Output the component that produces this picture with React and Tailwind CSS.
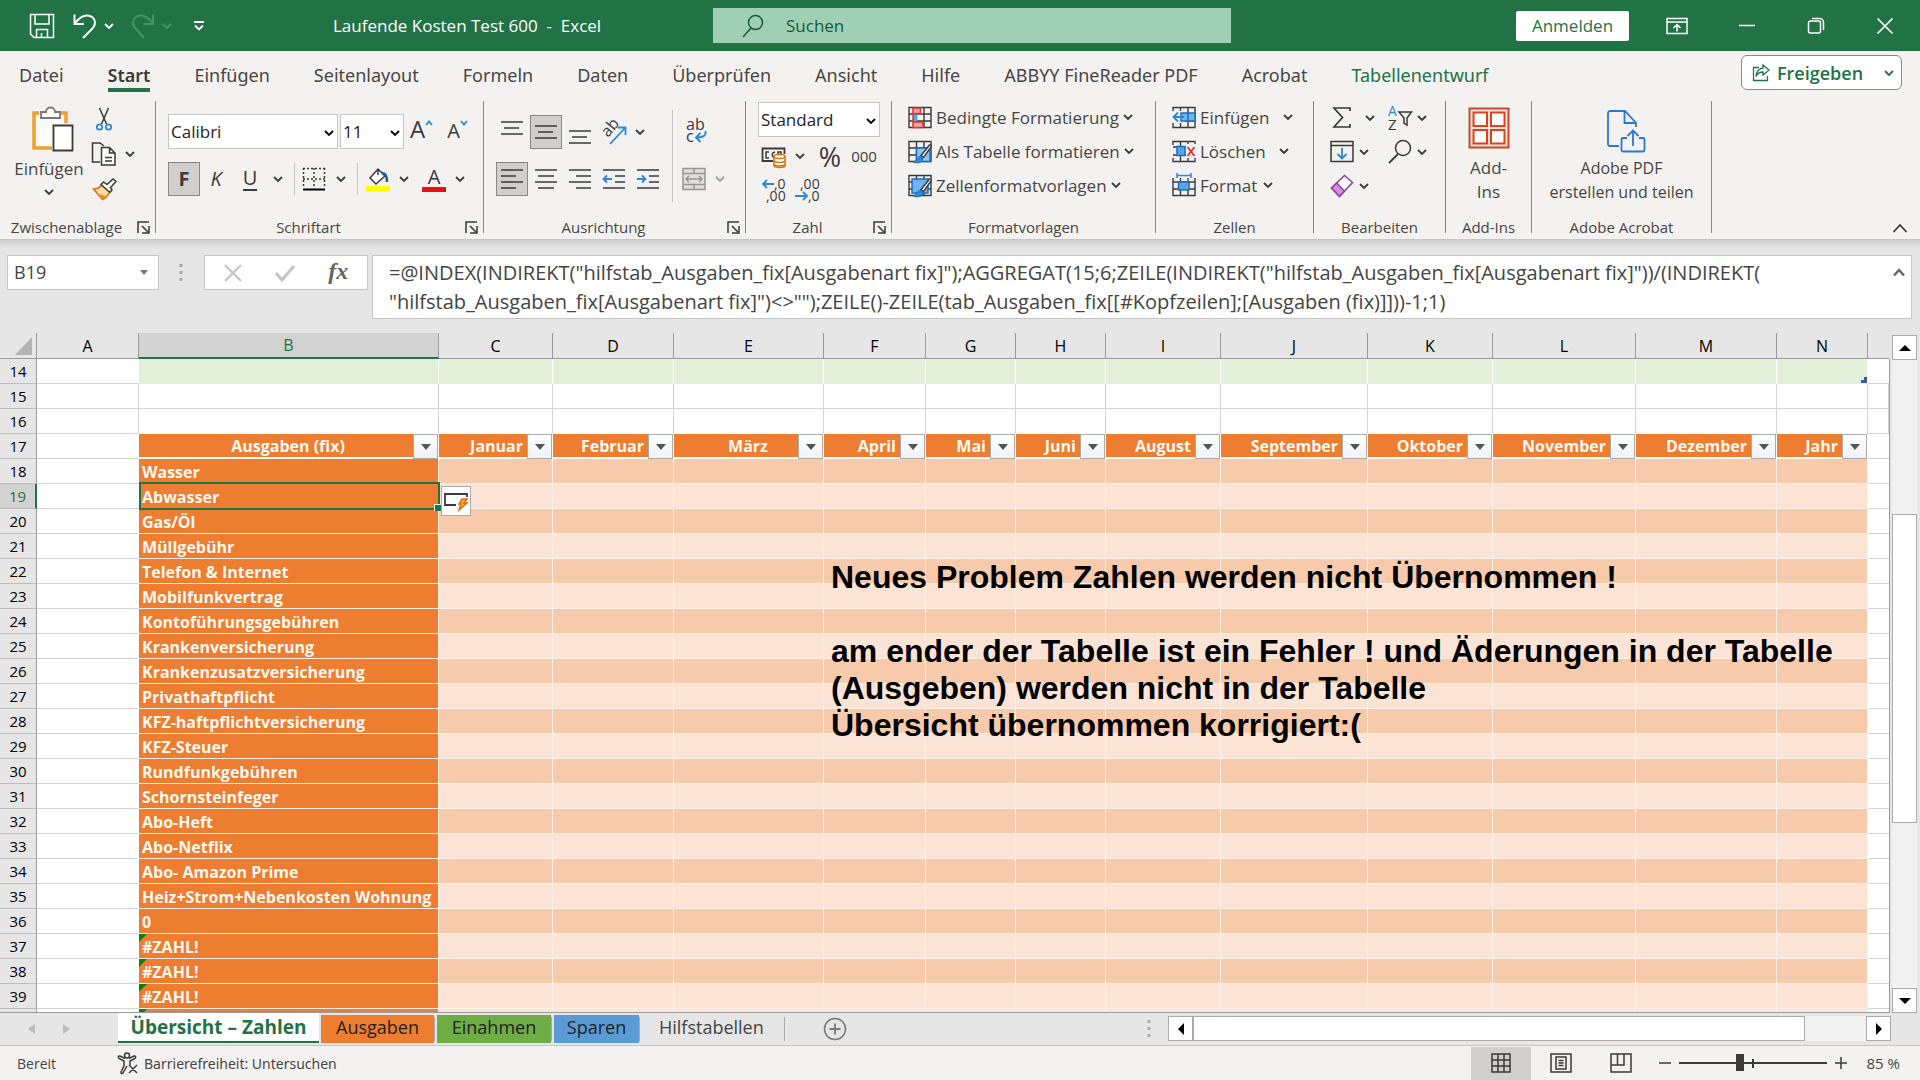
const tabs = [
  'Datei', 'Start', 'Einfügen', 'Seitenlayout', 'Formeln', 'Daten', 'Überprüfen', 'Ansicht',
  'Hilfe', 'ABBYY FineReader PDF', 'Acrobat', 'Tabellenentwurf',
];

const columns = [
  { id: 'B', width: 'w-[300px]', title: 'Ausgaben (fix)', center: true },
  { id: 'C', width: 'w-[114px]', title: 'Januar' },
  { id: 'D', width: 'w-[121px]', title: 'Februar' },
  { id: 'E', width: 'w-[150px]', title: 'März', center: true },
  { id: 'F', width: 'w-[102px]', title: 'April' },
  { id: 'G', width: 'w-[90px]', title: 'Mai' },
  { id: 'H', width: 'w-[90px]', title: 'Juni' },
  { id: 'I', width: 'w-[115px]', title: 'August' },
  { id: 'J', width: 'w-[147px]', title: 'September' },
  { id: 'K', width: 'w-[125px]', title: 'Oktober' },
  { id: 'L', width: 'w-[143px]', title: 'November' },
  { id: 'M', width: 'w-[141px]', title: 'Dezember' },
  { id: 'N', width: 'w-[91px]', title: 'Jahr' },
];

const costs = [
  'Wasser', 'Abwasser', 'Gas/Öl', 'Müllgebühr', 'Telefon & Internet', 'Mobilfunkvertrag',
  'Kontoführungsgebühren', 'Krankenversicherung', 'Krankenzusatzversicherung', 'Privathaftpflicht',
  'KFZ-haftpflichtversicherung', 'KFZ-Steuer', 'Rundfunkgebühren', 'Schornsteinfeger', 'Abo-Heft',
  'Abo-Netflix', 'Abo- Amazon Prime', 'Heiz+Strom+Nebenkosten Wohnung', '0', '#ZAHL!', '#ZAHL!',
  '#ZAHL!',
];

const formula = `=@INDEX(INDIREKT("hilfstab_Ausgaben_fix[Ausgabenart fix]");AGGREGAT(15;6;ZEILE(INDIREKT("hilfstab_Ausgaben_fix[Ausgabenart fix]"))/(INDIREKT(
"hilfstab_Ausgaben_fix[Ausgabenart fix]")<>"");ZEILE()-ZEILE(tab_Ausgaben_fix[[#Kopfzeilen];[Ausgaben (fix)]]))-1;1)`;

const sheets = [
  { name: 'Ausgaben', style: 'w-[113px] bg-[#ed7d31]' },
  { name: 'Einahmen', style: 'w-[114px] bg-[#70ad47]' },
  { name: 'Sparen', style: 'w-[85px] bg-[#5b9bd5]' },
];

function Svg({ w = 24, h = 24, className = '', children }) {
  return (
    <svg
      width={w}
      height={h}
      viewBox={`0 0 ${w} ${h}`}
      fill="none"
      stroke="#3b3a39"
      strokeWidth="1.5"
      className={`shrink-0 overflow-visible ${className}`}
      aria-hidden="true"
    >
      {children}
    </svg>
  );
}

function Chevron({ className = 'text-[#3b3a39]' }) {
  return (
    <Svg w={10} h={8} className={className}>
      <path d="M1 2 5 6 9 2" stroke="currentColor" strokeWidth="1.8" />
    </Svg>
  );
}

function IconButton({ label, active, className = 'w-8', children }) {
  return (
    <button
      aria-label={label}
      className={`flex h-[34px] shrink-0 items-center justify-center ${className} ${active ? 'border border-[#8a8886] bg-[#d0cfce]' : ''}`}
    >
      {children}
    </button>
  );
}

function Drop({ label, className = 'w-4', chevron }) {
  return (
    <button aria-label={label} className={`flex h-6 shrink-0 items-center justify-center ${className}`}>
      <Chevron className={chevron} />
    </button>
  );
}

function Group({ title, launcher, width, children }) {
  return (
    <>
      <section className={`flex h-[138px] shrink-0 flex-col ${width}`}>
        <div className="flex-1">{children}</div>
        <div className="flex h-[22px] items-center pb-[2px] text-[15px] text-[#484644]">
          <span className={`flex-1 text-center ${launcher ? 'pr-1' : ''}`}>{title}</span>
          {launcher && (
            <button aria-label={`${title} Optionen`} className="mr-[5px]">
              <Svg w={13} h={13}>
                <path d="M1 12V1h11M5 5l6 6M12 5v7H5" />
              </Svg>
            </button>
          )}
        </div>
      </section>
      <div className="h-[132px] w-px shrink-0 bg-[#8a8886]" />
    </>
  );
}

function Select({ label, value, className }) {
  return (
    <div className={`relative h-[35px] border border-[#c8c6c4] bg-white ${className}`}>
      <select aria-label={label} defaultValue={value} className="h-full w-full appearance-none px-[2px] text-[17px] text-[#252423] outline-none">
        <option>{value}</option>
      </select>
      <div className="pointer-events-none absolute top-[14px] right-[3px]">
        <Chevron className="text-black" />
      </div>
    </div>
  );
}

function Lines({ rows }) {
  return (
    <Svg w={24} h={24}>
      {rows.map(([x1, x2, y]) => <path key={y} d={`M${x1} ${y}H${x2}`} />)}
    </Svg>
  );
}

function TitleBar() {
  return (
    <header className="flex h-[51px] items-center bg-[#217346] text-white">
      <div className="flex w-[713px] shrink-0 items-center">
        <button aria-label="Speichern" className="ml-[29px]">
          <Svg w={26} h={26}>
            <g stroke="white">
              <path d="M1.5 1.5h23v23H5l-3.5-3.5zM6 2v9h14V2M7.5 24v-7.500h11V24M12.500 24v-4" />
            </g>
          </Svg>
        </button>
        <button aria-label="Rückgängig" className="ml-[17px]">
          <Svg w={26} h={26}>
            <path d="M2.5 1.5V11H12M2.5 11C6 6 10 2.500 15 2.500c4.500 0 8 3 8 7 0 3-1.500 5-3.500 7L11 25" stroke="white" strokeWidth="2" />
          </Svg>
        </button>
        <Drop label="Rückgängig Liste" className="ml-[3px] w-4" chevron="text-white" />
        <button aria-label="Wiederholen" className="ml-[13px]">
          <Svg w={26} h={26}>
            <path d="M23 1.500V11H13.500M23 11C19.500 6 15.500 2.500 11 2.500c-4.500 0-8 3-8 7 0 3 1.500 5 3.500 7L14 25" stroke="#4c9069" strokeWidth="2" />
          </Svg>
        </button>
        <Drop label="Wiederholen Liste" className="ml-[3px] w-4" chevron="text-[#4c9069]" />
        <button aria-label="Symbolleiste anpassen" className="ml-[18px]">
          <Svg w={12} h={12}>
            <path d="M1 2h10M2 5.500 6 9.500l4-4" stroke="white" strokeWidth="1.8" />
          </Svg>
        </button>
        <h1 className="ml-32 text-[17px] whitespace-pre">Laufende Kosten Test 600{'  -  '}Excel</h1>
      </div>
      <label className="flex h-[35px] w-[518px] shrink-0 items-center bg-[#a0cfb5] pl-[29px]">
        <Svg w={22} h={24}>
          <circle cx="13.5" cy="8.5" r="7" stroke="#155c36" />
          <path d="M9 14 1 23" stroke="#155c36" />
        </Svg>
        <input type="text" aria-label="Suchen" placeholder="Suchen" className="ml-[22px] flex-1 bg-transparent text-[17px] outline-none placeholder:text-[#155c36]" />
      </label>
      <div className="flex flex-1 items-center justify-end">
        <button className="h-[30px] w-[113px] rounded-xs bg-white text-[17px] leading-none text-[#217346]">Anmelden</button>
        <button aria-label="Menüband-Anzeigeoptionen" className="ml-7 flex w-10 justify-center">
          <Svg w={22} h={18}>
            <path d="M1 1.500h20v15H1zM1 5h20M11 14.500V8M7.500 11 11 7.500l3.500 3.500" stroke="white" />
          </Svg>
        </button>
        <button aria-label="Minimieren" className="ml-[30px] flex w-10 justify-center">
          <Svg w={16} h={16}><path d="M0 7.500h16" stroke="white" /></Svg>
        </button>
        <button aria-label="Verkleinern" className="ml-[29px] flex w-10 justify-center">
          <Svg w={18} h={18}>
            <rect x="1.5" y="4" width="12" height="12" rx="2" stroke="white" />
            <path d="M5 1.500h7.500a4 4 0 0 1 4 4V13" stroke="white" />
          </Svg>
        </button>
        <button aria-label="Schließen" className="mr-[15px] ml-[29px] flex w-10 justify-center">
          <Svg w={18} h={18}><path d="m1.500 1.500 15 15m0-15-15 15" stroke="white" strokeWidth="1.7" /></Svg>
        </button>
      </div>
    </header>
  );
}

function TabRow() {
  return (
    <nav className="flex h-[50px] items-start justify-between pr-[18px] pl-[19px]">
      <div className="flex gap-11 pt-[11px] font-['Noto_Sans',sans-serif] text-[18px] text-[#484644]">
        {tabs.map((t) => {
          if (t === 'Start') {
            return <a key={t} href="#start" className="h-[30px] border-b-4 border-[#217346] leading-[27px] font-semibold text-[#3b3a39]">{t}</a>;
          }
          return <a key={t} href={`#${t}`} className={`leading-[27px] ${t === 'Tabellenentwurf' ? 'text-[#217346]' : ''}`}>{t}</a>;
        })}
      </div>
      <div className="mt-1 flex h-[35px] w-[161px] items-center rounded-md border border-[#8a8886] bg-white">
        <button className="flex flex-1 items-center gap-[7px] pl-[10px] text-[18px] leading-none font-semibold text-[#217346]">
          <Svg w={18} h={18}>
            <path d="M7 3.500H1.500v13h14V12M11 1l6 5-6 5V8C8 8 5.500 9.500 4 12.500 4.500 7.500 7 4.500 11 4z" stroke="#217346" strokeWidth="1.300" />
          </Svg>
          Freigeben
        </button>
        <Drop label="Freigeben Optionen" className="mr-[2px] w-5" chevron="text-[#217346]" />
      </div>
    </nav>
  );
}

function TableIcon({ children }) {
  return (
    <Svg>
      <path d="M1 1.500h22v20H1zM1 8h22M1 15h22M8.500 1.500v20M16 1.500v20" strokeWidth="1.4" />
      {children}
    </Svg>
  );
}

function Brush() {
  return (
    <>
      <path d="M13 15.500 21.500 5c1-1 2.500.500 1.500 2L15.500 17.500z" fill="white" />
      <path d="M5 22c3 0 3-4 6.500-5.500 2 0 3.500 1.500 3 3.500-1.500 3-6 3.500-9.500 2z" fill="#2b88d8" stroke="#1c6fb5" strokeWidth="1" />
    </>
  );
}

function CommandRow({ icon, label, gap = 'ml-[6px]' }) {
  return (
    <button className="flex h-[34px] items-center text-[17px] text-[#484644]">
      {icon}
      <span className="ml-1">{label}</span>
      <span className={`mb-[2px] ${gap}`}><Chevron /></span>
    </button>
  );
}

function Ribbon() {
  return (
    <div className="flex border-b border-[#c8c6c4]">
      <Group title="Zwischenablage" launcher width="w-[155px]">
        <div className="flex pt-1">
          <button className="flex w-[90px] flex-col items-center pl-2 text-[17px] text-[#484644]">
            <Svg w={46} h={48} className="ml-2">
              <path d="M9 8H4v35h18M31 8h5v10" stroke="#f0a030" strokeWidth="3.500" />
              <path d="M6 11h27v8H21v22H6z" fill="#fbfbfa" stroke="none" />
              <path d="M11 7h5c0-6 9-6 9 0h5v6H11z" fill="white" stroke="#797775" strokeWidth="1.8" />
              <path d="M23.500 20.500h19v25h-19z" fill="white" strokeWidth="1.800" />
            </Svg>
            <span className="mt-1 leading-6">Einfügen</span>
            <span className="mt-[7px]"><Chevron /></span>
          </button>
          <div className="flex flex-col gap-[10px] pt-[2px]">
            <button aria-label="Ausschneiden" className="ml-[2px]">
              <Svg w={24} h={24}>
                <path d="m7.500 1 7 16M16.500 1l-7 16" />
                <circle cx="7.5" cy="20" r="2.7" stroke="#2b88d8" strokeWidth="1.8" />
                <circle cx="16.5" cy="20" r="2.7" stroke="#2b88d8" strokeWidth="1.8" />
              </Svg>
            </button>
            <div className="flex items-center">
              <button aria-label="Kopieren" className="ml-px">
                <Svg w={26} h={26}>
                  <path d="M9 21H1.500V2H9l4 3" />
                  <path d="M10.500 6.500h8l5.500 5.500v12H10.500zM18.500 6.500V12H24M14 16.500h7M14 20h7" fill="white" />
                </Svg>
              </button>
              <Drop label="Kopieren Optionen" className="ml-[5px] w-4" />
            </div>
            <button aria-label="Format übertragen" className="ml-[2px]">
              <Svg w={26} h={24}>
                <path d="M1.500 12c4 0 6-1 8-4l8 7c-1 3-4 6-7 7.500z" fill="#fbd9a5" stroke="#d9730d" />
                <path d="m6 17 8 2-3.500 3.500z" fill="#f08a24" stroke="none" />
                <path d="m9 7.500 2.500-2.500 3.500 2.500 6-5.500 3 2.500-5.500 6 1.500 2.500-2 2.500z" fill="white" />
              </Svg>
            </button>
          </div>
        </div>
      </Group>

      <Group title="Schriftart" launcher width="w-[327px]">
        <div className="flex flex-col gap-[13px] pt-[13px] pl-3">
          <div className="flex items-center">
            <Select label="Schriftart" value="Calibri" className="w-[170px]" />
            <Select label="Schriftgrad" value="11" className="ml-[2px] w-16" />
            <button aria-label="Schriftgrad vergrößern" className="ml-[6px] flex h-[34px] items-start text-[24px] leading-7 text-[#3b3a39]">
              A<Svg w={8} h={8} className="mt-1"><path d="m1 6 3-3.500L7 6" stroke="#2b88d8" strokeWidth="1.8" /></Svg>
            </button>
            <button aria-label="Schriftgrad verkleinern" className="ml-[14px] flex h-[34px] items-start text-[20px] leading-8 text-[#3b3a39]">
              A<Svg w={8} h={8} className="mt-1"><path d="m1 2 3 3.500L7 2" stroke="#2b88d8" strokeWidth="1.8" /></Svg>
            </button>
          </div>
          <div className="flex items-center text-[20px] text-[#3b3a39]">
            <IconButton label="Fett" active><b>F</b></IconButton>
            <IconButton label="Kursiv" className="w-8"><i>K</i></IconButton>
            <IconButton label="Unterstrichen" className="ml-[2px] w-8"><span className="border-b-2 border-[#3b3a39] leading-[22px]">U</span></IconButton>
            <Drop label="Unterstreichungsart" className="ml-1 w-4" />
            <div className="ml-2 h-8 w-px bg-[#c8c6c4]" />
            <IconButton label="Rahmen" className="ml-[3px] w-8">
              <Svg>
                <path d="M1 1.500h22M1 12h22M1.500 1v20M12 1v20M22.500 1v20" strokeDasharray="2 2" />
                <path d="M1 22.500h22" stroke="black" strokeWidth="2" />
              </Svg>
            </IconButton>
            <Drop label="Rahmenart" className="ml-[3px] w-4" />
            <div className="ml-2 h-8 w-px bg-[#c8c6c4]" />
            <IconButton label="Füllfarbe" className="ml-1 w-8">
              <Svg>
                <path d="M0 19h24v5H0z" fill="#ffff00" stroke="none" />
                <path d="m4 11 8-9 7 7-9 8zM12 2v6" fill="white" />
                <path d="M16 6c4 0 5 3 5 9" stroke="#1c5fa8" strokeWidth="2.5" />
              </Svg>
            </IconButton>
            <Drop label="Füllfarbe wählen" className="ml-[2px] w-4" />
            <IconButton label="Schriftfarbe" className="ml-[6px] w-8">
              <span className="h-[25px] w-6 border-b-5 border-[#e81010] text-center leading-[20px]">A</span>
            </IconButton>
            <Drop label="Schriftfarbe wählen" className="ml-[2px] w-4" />
          </div>
        </div>
      </Group>

      <Group title="Ausrichtung" launcher width="w-[261px]">
        <div className="flex pl-3">
          <div className="flex flex-col gap-[13px] pt-[14px]">
            <div className="flex items-center gap-[2px]">
              <IconButton label="Oben ausrichten"><Lines rows={[[1, 23, 2], [4, 19, 8], [1, 23, 14]]} /></IconButton>
              <IconButton label="Zentriert ausrichten" active><Lines rows={[[1, 23, 6], [4, 19, 12], [1, 23, 18]]} /></IconButton>
              <IconButton label="Unten ausrichten"><Lines rows={[[1, 23, 11], [4, 19, 17], [1, 23, 23]]} /></IconButton>
              <IconButton label="Ausrichtung drehen">
                <Svg w={28} h={28}>
                  <text x="0" y="0" transform="translate(8 20) rotate(-50)" fontSize="16" fill="#3b3a39" stroke="none">ab</text>
                  <path d="M10 26 25 10M18 9.500h7.500V17" stroke="#2b88d8" strokeWidth="1.800" />
                </Svg>
              </IconButton>
              <Drop label="Drehung wählen" />
            </div>
            <div className="flex items-center gap-[2px]">
              <IconButton label="Linksbündig" active><Lines rows={[[1, 23, 3], [1, 16, 9], [1, 23, 15], [1, 16, 21]]} /></IconButton>
              <IconButton label="Zentriert"><Lines rows={[[1, 23, 3], [4, 20, 9], [1, 23, 15], [4, 20, 21]]} /></IconButton>
              <IconButton label="Rechtsbündig"><Lines rows={[[1, 23, 3], [8, 23, 9], [1, 23, 15], [8, 23, 21]]} /></IconButton>
              <IconButton label="Einzug verkleinern">
                <Svg>
                  <path d="M1 3h22M13 9h10M13 15h10M1 21h22" />
                  <path d="M10 12H2M5 8.500 1.500 12 5 15.500" stroke="#2b88d8" strokeWidth="1.8" />
                </Svg>
              </IconButton>
              <IconButton label="Einzug vergrößern">
                <Svg>
                  <path d="M1 3h22M13 9h10M13 15h10M1 21h22" />
                  <path d="M1 12h8M6 8.500 9.500 12 6 15.500" stroke="#2b88d8" strokeWidth="1.8" />
                </Svg>
              </IconButton>
            </div>
          </div>
          <div className="mt-[9px] ml-2 h-[92px] w-px bg-[#c8c6c4]" />
          <div className="flex flex-col gap-[13px] pt-[14px] pl-[3px]">
            <IconButton label="Textumbruch" className="w-10">
              <Svg w={24} h={28}>
                <text x="2" y="12" fontSize="16" fill="#3b3a39" stroke="none">ab</text>
                <text x="2" y="24" fontSize="16" fill="#3b3a39" stroke="none">c</text>
                <path d="M21.500 13c1 5-3 6.500-9 6.500M16.500 15l-4.500 4.500 4.500 4.500" stroke="#2b88d8" strokeWidth="1.9" />
              </Svg>
            </IconButton>
            <div className="flex items-center">
              <IconButton label="Verbinden und zentrieren" className="ml-[2px] w-8">
                <Svg>
                  <path d="M1 1.500h22v21H1z" fill="#e1dfdd" stroke="#979593" />
                  <path d="M1 6.500h22M1 17.500h22M12 1.500v5M12 17.500v5M4 12h16M7 9l-3 3 3 3M17 9l3 3-3 3" stroke="#979593" />
                </Svg>
              </IconButton>
              <Drop label="Verbinden Optionen" className="ml-[2px] w-4" chevron="text-[#a19f9d]" />
            </div>
          </div>
        </div>
      </Group>

      <Group title="Zahl" launcher width="w-[145px]">
        <div className="pt-px pl-3">
          <Select label="Zahlenformat" value="Standard" className="w-[122px]" />
          <div className="mt-[2px] flex items-center text-[#3b3a39]">
            <IconButton label="Buchhaltungsformat">
              <Svg w={26} h={26}>
                <path d="M12 18H1.500V5.500h22V11" strokeWidth="1.8" />
                <path d="M8 9H5v6h3M14 9.500c-3-1.500-4 5 0 5M17 12V9h3v2" />
                <path d="M13 13.500v9c0 2.500 11 2.500 11 0v-9" fill="white" stroke="#d9730d" />
                <ellipse cx="18.5" cy="13.5" rx="5.5" ry="2" fill="white" stroke="#d9730d" />
                <path d="M13 17.500c0 2.500 11 2.500 11 0M13 21c0 2.500 11 2.500 11 0" stroke="#d9730d" />
              </Svg>
            </IconButton>
            <Drop label="Währung wählen" className="ml-[2px] w-4" />
            <IconButton label="Prozentformat" className="ml-[8px] w-7"><span className="text-[27px] leading-none">%</span></IconButton>
            <IconButton label="1.000er-Trennzeichen" className="ml-[6px] w-7"><span className="text-[15px] leading-none">000</span></IconButton>
          </div>
          <div className="flex items-center">
            <IconButton label="Dezimalstelle hinzufügen">
              <Svg w={26} h={28}>
                <text x="13" y="13" fontSize="14" fill="#3b3a39" stroke="none">,0</text>
                <text x="5" y="25" fontSize="14" fill="#3b3a39" stroke="none">,00</text>
                <path d="M13 8H2M6 4 2 8l4 4" stroke="#2b88d8" strokeWidth="1.8" />
              </Svg>
            </IconButton>
            <IconButton label="Dezimalstelle entfernen" className="ml-[2px] w-8">
              <Svg w={26} h={28}>
                <text x="5" y="13" fontSize="14" fill="#3b3a39" stroke="none">,00</text>
                <text x="13" y="25" fontSize="14" fill="#3b3a39" stroke="none">,0</text>
                <path d="M0 20h12M8 16l4 4-4 4" stroke="#2b88d8" strokeWidth="1.8" />
              </Svg>
            </IconButton>
          </div>
        </div>
      </Group>

      <Group title="Formatvorlagen" width="w-[263px]">
        <div className="pl-4">
          <CommandRow
            label="Bedingte Formatierung"
            gap="ml-1"
            icon={(
              <TableIcon>
                <path d="M5 2h7.500v5.500H5zM5 16h10v5.500H5z" fill="#f7a5a5" stroke="#e03030" />
                <path d="M5 8.500h4V15H5z" fill="#5aa5e8" stroke="none" />
                <path d="M5 8v8" stroke="#e03030" />
              </TableIcon>
            )}
          />
          <CommandRow label="Als Tabelle formatieren" gap="ml-1" icon={<TableIcon><path d="M8.500 8H22v13.500H8.500z" fill="#8cc4f5" stroke="#1c6fb5" /><Brush /></TableIcon>} />
          <CommandRow
            label="Zellenformatvorlagen"
            gap="ml-1"
            icon={(
              <TableIcon>
                <path d="M4 5h16v14H4z" fill="#6fb3f2" stroke="#1c6fb5" />
                <Brush />
              </TableIcon>
            )}
          />
        </div>
      </Group>

      <Group title="Zellen" width="w-[157px]">
        <div className="pl-4">
          <CommandRow
            label="Einfügen"
            gap="ml-[13px]"
            icon={(
              <TableIcon>
                <path d="M0 5h13v12H0z" fill="#f3f2f1" stroke="none" />
                <path d="M9 7h14v8H9z" fill="#6fb3f2" stroke="#1c6fb5" />
                <path d="M16 7v8" stroke="#1c6fb5" />
                <path d="M12 11H1.500M6 6.500 1.500 11 6 15.500" stroke="#2b88d8" strokeWidth="1.8" />
              </TableIcon>
            )}
          />
          <CommandRow
            label="Löschen"
            gap="ml-[13px]"
            icon={(
              <TableIcon>
                <path d="M0 5h5v13H0zM14 4h10v14H14z" fill="#f3f2f1" stroke="none" />
                <path d="M1 7h4M1 15h4" />
                <path d="M5 6.500h8v9H5z" fill="#5aa5e8" stroke="#1c6fb5" />
                <path d="m15.500 7 7 9m0-9-7 9" stroke="#e03030" strokeWidth="1.8" />
              </TableIcon>
            )}
          />
          <CommandRow
            label="Format"
            icon={(
              <TableIcon>
                <path d="M0 0h24v4H0z" fill="#f3f2f1" stroke="none" />
                <path d="M6.500 8H17v8H6.500z" fill="#5aa5e8" stroke="#1c6fb5" />
                <path d="M5-1v5M19-1v5M5 1.500h14" stroke="#2b88d8" />
              </TableIcon>
            )}
          />
        </div>
      </Group>

      <Group title="Bearbeiten" width="w-[131px]">
        <div className="flex pl-3">
          <div className="w-[58px]">
            <div className="flex h-[34px] items-center gap-1">
              <IconButton label="Summe"><Svg><path d="M20 5V2H4l8.500 9.500L4 21h16v-3" strokeWidth="1.700" /></Svg></IconButton>
              <Drop label="Summe Optionen" />
            </div>
            <div className="flex h-[34px] items-center">
              <IconButton label="Ausfüllen">
                <Svg>
                  <path d="M1 1.500h22v20H1zM1 5.500h22" />
                  <path d="M12 8v10M7.500 14l4.500 4.500 4.500-4.500" stroke="#2b88d8" strokeWidth="1.8" />
                </Svg>
              </IconButton>
              <Drop label="Ausfüllen Optionen" className="w-3" />
            </div>
            <div className="flex h-[34px] items-center">
              <IconButton label="Löschen">
                <Svg>
                  <path d="m1.500 14 13-12.500 8 7L9.500 22.500z" fill="white" stroke="#8a3f9c" />
                  <path d="m1.500 14 5-5 8 8-5 5.500z" fill="#d68be0" stroke="#8a3f9c" />
                </Svg>
              </IconButton>
              <Drop label="Löschen Optionen" className="w-3" />
            </div>
          </div>
          <div>
            <div className="flex h-[34px] items-center">
              <IconButton label="Sortieren und Filtern">
                <Svg w={26} h={26}>
                  <text x="1" y="11" fontSize="14" fill="#2b88d8" stroke="none">A</text>
                  <text x="1" y="25" fontSize="15" fill="#3b3a39" stroke="none">Z</text>
                  <path d="M12 7h12.500l-4.500 6v7l-3-2v-5z" />
                </Svg>
              </IconButton>
              <Drop label="Sortieren Optionen" className="w-3" />
            </div>
            <div className="flex h-[34px] items-center">
              <IconButton label="Suchen und Auswählen">
                <Svg w={26} h={26}>
                  <circle cx="16" cy="9" r="7.5" />
                  <path d="M11 15 2 24" strokeWidth="1.8" />
                </Svg>
              </IconButton>
              <Drop label="Suchen Optionen" className="w-3" />
            </div>
          </div>
        </div>
      </Group>

      <Group title="Add-Ins" width="w-[85px]">
        <button className="flex w-full flex-col items-center pt-[6px] text-[17px] leading-6 text-[#484644]">
          <Svg w={42} h={42}>
            <path d="M1.500 1.500h39v39h-39z" fill="#fbe3db" stroke="#c9482b" strokeWidth="2" />
            <path d="M5.500 5.500h13.500v13.500H5.500zM23 5.500h13.500v13.500H23zM5.500 23h13.500v13.500H5.500zM23 23h13.500v13.500H23z" fill="white" stroke="#d8431f" strokeWidth="2" />
          </Svg>
          <span className="mt-[7px] w-14">Add-Ins</span>
        </button>
      </Group>

      <Group title="Adobe Acrobat" width="w-[179px]">
        <button className="flex w-full flex-col items-center pt-[8px] text-[16px] leading-6 text-[#484644]">
          <Svg w={40} h={44} className="ml-2">
            <g stroke="#2f74d0" strokeWidth="1.8">
              <path d="M13 37H4a2 2 0 0 1-2-2V4a2 2 0 0 1 2-2h15l11 12v4M18.500 2v12H30" />
              <path d="M21 29h-4a1.500 1.500 0 0 0-1.500 1.500V41a1.500 1.500 0 0 0 1.500 1.500h20a1.500 1.500 0 0 0 1.500-1.500V30.500A1.500 1.500 0 0 0 37 29h-4M27 37V22M21.500 27l5.500-5.500 5.500 5.500" />
            </g>
          </Svg>
          <span className="mt-[3px]">Adobe PDF<br />erstellen und teilen</span>
        </button>
      </Group>

      <div className="flex h-[138px] flex-1 items-end justify-end pr-3 pb-1">
        <button aria-label="Menüband reduzieren">
          <Svg w={16} h={14}><path d="m1.500 11 6.500-7 6.500 7" strokeWidth="1.8" /></Svg>
        </button>
      </div>
    </div>
  );
}

function FormulaBar() {
  return (
    <div className="flex h-[93px] items-start bg-linear-to-b from-[#d0d0d0] to-[#e6e6e6] to-10% pt-[15px] pr-2 pl-[7px]">
      <div className="flex h-[35px] w-[152px] items-center border border-[#c6c6c6] bg-white">
        <input type="text" aria-label="Namenfeld" defaultValue="B19" className="w-0 flex-1 pl-[6px] text-[18px] text-[#444] outline-none" />
        <button aria-label="Namenfeld öffnen" className="w-6 pl-[6px]">
          <Svg w={8} h={5}><path d="M0 0h8L4 5z" fill="#777" stroke="none" /></Svg>
        </button>
      </div>
      <Svg w={4} h={20} className="mt-2 ml-5"><path d="M2 1v3M2 8v3M2 15v3" stroke="#aaa" strokeWidth="3" /></Svg>
      <div className="ml-[21px] flex h-[35px] w-[164px] items-center justify-around border border-[#c6c6c6] bg-white px-[2px]">
        <button aria-label="Abbrechen"><Svg w={18} h={18}><path d="m1 1 16 16m0-16L1 17" stroke="#c4c4c4" strokeWidth="2.2" /></Svg></button>
        <button aria-label="Eingeben"><Svg w={20} h={18}><path d="m1 9 6 7L19 2" stroke="#c4c4c4" strokeWidth="3" /></Svg></button>
        <button aria-label="Funktion einfügen" className="pb-1 font-['Liberation_Serif',serif] text-[24px] leading-none font-bold text-[#666] italic">fx</button>
      </div>
      <div className="ml-1 flex h-[64px] flex-1 items-start border border-[#c6c6c6] bg-white">
        <textarea
          aria-label="Bearbeitungsleiste"
          rows="2"
          wrap="off"
          defaultValue={formula}
          className="h-full flex-1 resize-none overflow-hidden pt-[2px] pl-4 text-[20px] leading-[29px] text-[#444] outline-none"
        />
        <button aria-label="Bearbeitungsleiste reduzieren" className="mt-[10px] mr-[6px]">
          <Svg w={12} h={12}><path d="M1 9.500 6 4l5 5.500" stroke="#666" strokeWidth="2.5" /></Svg>
        </button>
      </div>
    </div>
  );
}

function RowHead({ n, active }) {
  return (
    <th className={`h-[25px] border-b border-b-[#bdbdbd] text-[15px] leading-6 font-normal ${active ? 'border-r-2 border-r-[#217346] bg-[#d2d2d2] text-[#217346]' : 'border-r border-r-[#9b9b9b] bg-[#e6e6e6] text-black'}`}>
      {n}
    </th>
  );
}

function FilterHead({ title, center }) {
  return (
    <td className="border-r border-b-2 border-white bg-[#ed7d31] text-[16px] font-bold text-[#fff8f0]">
      <div className="flex h-[23px] items-center">
        <span className={`flex-1 pt-[2px] leading-[21px] ${center ? 'pl-6 text-center' : 'pr-1 text-right'}`}>{title}</span>
        <button aria-label={`${title} filtern`} className="-mb-[2px] flex h-[25px] w-[25px] items-center justify-center border border-[#ababab] bg-linear-to-b from-white to-[#eef1f7]">
          <Svg w={10} h={6}><path d="M0 0h10L5 6z" fill="#555" stroke="none" /></Svg>
        </button>
      </div>
    </td>
  );
}

function PlainRow({ n, last }) {
  return (
    <tr className="h-[25px]">
      <RowHead n={n} />
      {['A', ...columns.map((c) => c.id), 'O'].map((id) => (
        <td key={id} className={`border-r border-[#d4d4d4] ${last && id !== 'A' && id !== 'O' ? '' : 'border-b'}`} />
      ))}
    </tr>
  );
}

function CostRow({ n, name }) {
  const active = n === 19;
  const tint = n % 2 === 0 ? 'bg-[#f7caac]' : 'bg-[#fbe4d5]';
  return (
    <tr className="h-[25px]">
      <RowHead n={n} active={active} />
      <td className="border-b border-[#d4d4d4]" />
      <td className="relative border-r border-b border-[#fdf1e8] bg-[#ed7d31] pt-[2px] pl-[3px] text-[16px] leading-[22px] font-bold whitespace-nowrap text-[#fff8f0]">
        {name}
        {(name === '#ZAHL!' || !name) && (
          <Svg w={8} h={8} className="absolute top-0 left-0"><path d="M0 0h8L0 8z" fill="#107c10" stroke="none" /></Svg>
        )}
        {active && (
          <>
            <div className="absolute -top-[2px] -right-[2px] -bottom-[2px] left-0 z-10 border-2 border-[#217346]" />
            <div className="absolute -right-[3px] -bottom-[3px] z-10 h-[7px] w-[7px] border-t border-l border-white bg-[#217346]" />
            <button aria-label="Schnellanalyse" className="absolute top-[2px] left-[302px] z-10 flex h-[30px] w-[30px] items-center justify-center border border-[#ababab] bg-white">
              <Svg w={24} h={20}>
                <path d="M12 14H1V3h22v3" strokeWidth="1.8" />
                <path d="M18 8h5l-3 4h3l-8 7 2-6h-2z" fill="#f5b041" stroke="#d9730d" />
              </Svg>
            </button>
          </>
        )}
      </td>
      {columns.slice(1).map((c) => <td key={c.id} className={`border-r border-b border-[#fdf1e8] ${tint}`} />)}
      <td className="border-b border-[#d4d4d4]" />
    </tr>
  );
}

function Sheet() {
  return (
    <div className="relative min-h-0 flex-1 overflow-hidden border-b border-[#9b9b9b]">
      <table className="w-full table-fixed border-separate border-spacing-0 bg-white">
        <colgroup>
          <col className="w-[37px]" />
          <col className="w-[102px]" />
          {columns.map((c) => <col key={c.id} className={c.width} />)}
          <col />
        </colgroup>
        <thead>
          <tr className="h-[26px] bg-[#e6e6e6] text-[16px] leading-6">
            <th className="border-r border-b border-[#9b9b9b]">
              <Svg w={17} h={18} className="mr-1 ml-auto"><path d="M17 0v18H0z" fill="#b4b4b4" stroke="none" /></Svg>
            </th>
            <th className="border-r border-b border-[#9b9b9b] font-normal">A</th>
            {columns.map((c) => (
              <th
                key={c.id}
                className={`border-r border-r-[#9b9b9b] font-normal ${c.id === 'B' ? 'border-b-2 border-b-[#217346] bg-[#d2d2d2] text-[#217346]' : 'border-b border-b-[#9b9b9b]'}`}
              >
                {c.id}
              </th>
            ))}
            <th className="border-b border-[#9b9b9b]" />
          </tr>
        </thead>
        <tbody>
          <tr className="h-[25px]">
            <RowHead n={14} />
            <td className="border-b border-[#d4d4d4]" />
            {columns.map((c) => (
              <td key={c.id} className="relative border-r border-white bg-[#e2f0d9]">
                {c.id === 'N' && <Svg w={6} h={6} className="absolute right-0 bottom-px"><path d="M3 0h3v6H0V3h3z" fill="#3b5998" stroke="none" /></Svg>}
              </td>
            ))}
            <td className="border-b border-[#d4d4d4]" />
          </tr>
          <PlainRow n={15} />
          <PlainRow n={16} last />
          <tr className="h-[25px]">
            <RowHead n={17} />
            <td className="border-b border-[#d4d4d4]" />
            {columns.map((c) => <FilterHead key={c.id} title={c.title} center={c.center} />)}
            <td className="border-b border-[#d4d4d4]" />
          </tr>
          {costs.map((name, i) => <CostRow key={i} n={i + 18} name={name} />)}
          <CostRow />
        </tbody>
      </table>
      {/* free text box lying over the cells */}
      <div className="absolute top-[226px] left-[831px] font-['Liberation_Sans',sans-serif] text-[32px] leading-[37px] font-bold whitespace-nowrap text-black">
        <p>Neues Problem Zahlen werden nicht Übernommen !</p>
        <p className="mt-[37px]">am ender der Tabelle ist ein Fehler ! und Äderungen in der Tabelle</p>
        <p>(Ausgeben) werden nicht in der Tabelle</p>
        <p>Übersicht übernommen korrigiert:(</p>
      </div>
    </div>
  );
}

function ScrollButton({ label, d }) {
  return (
    <button aria-label={label} className="flex h-[25px] w-[25px] shrink-0 items-center justify-center border border-[#ababab] bg-white">
      <Svg w={12} h={12}><path d={d} fill="black" stroke="none" /></Svg>
    </button>
  );
}

function SheetTabs() {
  return (
    <div className="flex h-[33px] items-start border-b border-[#c6c6c6] bg-[#e6e6e6] text-[18px] text-[#444]">
      <div className="flex h-8 w-[118px] items-center gap-7 pl-7">
        <button aria-label="Vorheriges Blatt"><Svg w={7} h={10}><path d="M7 0v10L0 5z" fill="#bbb" stroke="none" /></Svg></button>
        <button aria-label="Nächstes Blatt"><Svg w={7} h={10}><path d="M0 0v10l7-5z" fill="#bbb" stroke="none" /></Svg></button>
      </div>
      <button className="h-[30px] w-[201px] border-b-2 border-[#217346] bg-white text-[19px] leading-[28px] font-bold text-[#217346]">Übersicht – Zahlen</button>
      {sheets.map((s) => (
        <div key={s.name} className="flex">
          <button className={`mt-[2px] ml-[2px] h-7 leading-6 text-[#1f1f1f] ${s.style}`}>
            <span className="block h-7 leading-6">{s.name}</span>
          </button>
          <div className="mt-1 h-6 w-px bg-[#ababab]" />
        </div>
      ))}
      <button className="mt-[2px] ml-[19px] h-7"><span className="block h-7 leading-6">Hilfstabellen</span></button>
      <div className="mt-1 ml-[20px] h-6 w-px bg-[#ababab]" />
      <button aria-label="Neues Blatt" className="mt-1 ml-[38px]">
        <Svg w={24} h={24}><circle cx="12" cy="12" r="10.5" stroke="#777" /><path d="M12 6.500v11M6.500 12h11" stroke="#777" strokeWidth="1.8" /></Svg>
      </button>
      <div className="flex flex-1 items-center justify-end pt-[3px] pr-[29px]">
        <Svg w={4} h={20} className="mr-[17px]"><path d="M2 1v3M2 8v3M2 15v3" stroke="#aaa" strokeWidth="3" /></Svg>
        <div className="flex w-[723px] bg-[#f1f1f1]">
          <ScrollButton label="Nach links" d="M9 0v12L3 6z" />
          <div className="h-[25px] w-[612px] border border-[#ababab] bg-white" />
          <div className="flex-1" />
          <ScrollButton label="Nach rechts" d="M3 0v12l6-6z" />
        </div>
      </div>
    </div>
  );
}

function StatusBar() {
  return (
    <footer className="flex h-[34px] items-center bg-[#f3f2f1] text-[14px] text-[#484644]">
      <span className="ml-[17px] w-[100px]">Bereit</span>
      <button className="flex items-center gap-[5px] font-['Noto_Sans',sans-serif]">
        <Svg w={22} h={22}>
          <circle cx="10" cy="3.5" r="2.5" />
          <path d="M8 6.500 3 4c-2-.500-2.500 2 0 3l4 2v5l-3 6c-.500 1.500 1.500 2 2 1l4-7M12 6.500 17 4c2-.500 2.500 2 0 3l-4 2v4M12 13l8 8M20 13l-8 8" />
        </Svg>
        Barrierefreiheit: Untersuchen
      </button>
      <div className="flex flex-1 items-center justify-end">
        <button aria-label="Normal" className="flex h-[33px] w-[60px] items-center justify-center bg-[#d0cfce]">
          <Svg w={20} h={20}><path d="M1 1h18v18H1zM1 7h18M1 13h18M7 1v18M13 1v18" /></Svg>
        </button>
        <button aria-label="Seitenlayout" className="flex h-[33px] w-[60px] items-center justify-center">
          <Svg w={22} h={20}><path d="M1 1h20v18H1zM6 4h10v12H6zM8.500 7.500h5M8.500 10h5M8.500 12.500h5" /></Svg>
        </button>
        <button aria-label="Umbruchvorschau" className="flex h-[33px] w-[60px] items-center justify-center">
          <Svg w={22} h={20}><path d="M1 1h20v18H1zM1 12h13V1M7.500 1v11" /></Svg>
        </button>
        <button aria-label="Verkleinern" className="ml-2">
          <Svg w={12} h={12}><path d="M0 6h12" /></Svg>
        </button>
        <div className="relative ml-2 flex h-[17px] w-[148px] items-center">
          <input
            type="range"
            aria-label="Zoom"
            min="10"
            max="192"
            defaultValue="85"
            className="h-[17px] w-full appearance-none bg-transparent [&::-webkit-slider-runnable-track]:h-[2px] [&::-webkit-slider-runnable-track]:bg-[#3b3a39] [&::-webkit-slider-thumb]:-mt-[8px] [&::-webkit-slider-thumb]:h-[17px] [&::-webkit-slider-thumb]:w-2 [&::-webkit-slider-thumb]:appearance-none [&::-webkit-slider-thumb]:bg-[#3b3a39]"
          />
          <div className="absolute left-[73px] h-[9px] w-[2px] bg-[#3b3a39]" />
        </div>
        <button aria-label="Vergrößern" className="ml-2">
          <Svg w={12} h={12}><path d="M0 6h12M6 0v12" /></Svg>
        </button>
        <span className="mr-5 ml-5 text-[15px]">85 %</span>
      </div>
    </footer>
  );
}

export default function App() {
  return (
    <div className="flex h-screen flex-col overflow-hidden bg-[#f3f2f1] font-['Open_Sans','Noto_Sans',sans-serif]">
      <TitleBar />
      <TabRow />
      <Ribbon />
      <FormulaBar />
      <main className="flex min-h-0 flex-1 bg-[#e6e6e6]">
        <Sheet />
        <div className="mt-[26px] w-px bg-[#9b9b9b]" />
        <div className="mt-[2px] mr-[3px] ml-[2px] flex w-[25px] flex-col bg-[#f1f1f1]">
          <ScrollButton label="Nach oben" d="M0 9h12L6 3z" />
          <div className="flex-155" />
          <div className="flex-309 border border-[#ababab] bg-white" />
          <div className="flex-166" />
          <ScrollButton label="Nach unten" d="M0 3h12L6 9z" />
        </div>
      </main>
      <SheetTabs />
      <StatusBar />
    </div>
  );
}
